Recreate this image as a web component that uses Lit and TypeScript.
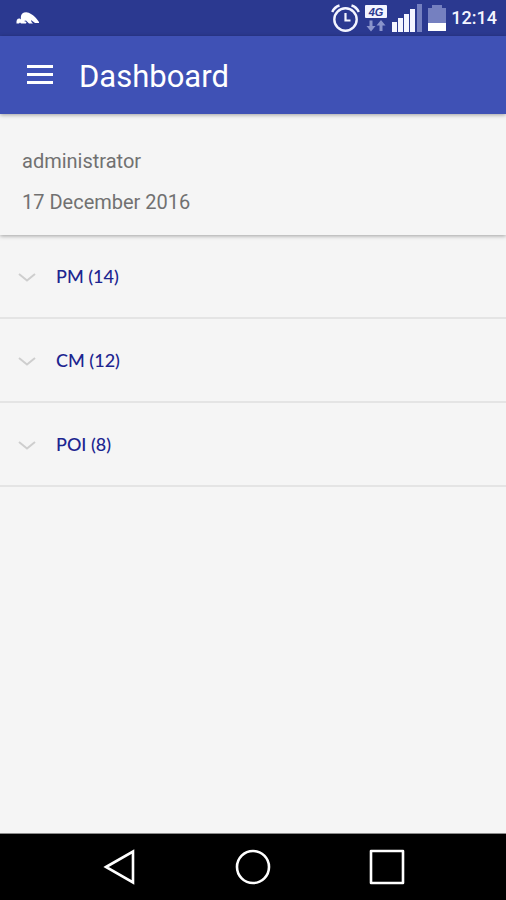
import { LitElement, html, css } from "lit";
import { customElement, property, state } from "lit/decorators.js";

@customElement("status-bar")
class StatusBar extends LitElement {
  static styles = css`
    :host {
      display: flex;
      align-items: center;
      justify-content: space-between;
      height: 36px;
      padding: 0 9px 0 16px;
      background: #2b3990;
      color: #f4f5ff;
      font: 500 18px/36px Roboto, sans-serif;
    }
    .indicators {
      display: flex;
      align-items: center;
      gap: 5px;
    }
    svg {
      display: block;
    }
    .net {
      font: italic 700 11px "Liberation Sans", sans-serif;
      fill: #2b3990;
    }
  `;
  render() {
    return html`
      <svg width="24" height="14" viewBox="0 0 24 14" fill="#fff" aria-hidden="true">
        <path d="M0.500 12.500Q0 7 4 7.500L5 8.500Q4 3 8 1.500Q12 0.500 15 3Q19 5 23 11V12H19L15 9L15.500 11L17 12.500H13L10 9.500L8 10L10.500 11L10 12.500H5L4 11.500L3 12.500Z"/>
      </svg>
      <div class="indicators">
        <svg width="29" height="28" viewBox="0 0 29 28" fill="none" stroke="#f4f5ff" aria-hidden="true">
          <circle cx="14.500" cy="15.500" r="11.200" stroke-width="2.400"/>
          <path d="M14.500 9V16.500H19.500" stroke-width="2.200"/>
          <path d="M1.200 8Q3.500 3 8.500 1.500M27.800 8Q25.500 3 20.500 1.500" stroke-width="2.400"/>
        </svg>
        <svg width="22" height="28" viewBox="0 0 22 28" aria-label="4G">
          <rect y="1" width="22" height="13" rx="1" fill="#f4f5ff"/>
          <text class="net" x="11" y="12" text-anchor="middle">4G</text>
          <path d="M4.500 16.500H7.500V22H10.500L6 27.500L1.500 22H4.500ZM14.500 27H17.500V21.500H20.500L16 16L11.500 21.500H14.500Z" fill="#8a94cb"/>
        </svg>
        <svg width="31" height="28" viewBox="0 0 31 28" fill="#f4f5ff" aria-hidden="true">
          <path d="M0 18H5V28H0ZM6 14H11V28H6ZM12 10H17V28H12ZM18 5H23V28H18Z"/>
          <path d="M25 0H30V28H25Z" fill="#7580c0"/>
        </svg>
        <svg width="18" height="28" viewBox="0 0 18 28" aria-hidden="true">
          <path d="M4 1H14V4H18V19H0V4H4Z" fill="#7580c0"/>
          <rect y="19" width="18" height="8" fill="#fff"/>
        </svg>
        <time>12:14</time>
      </div>
    `;
  }
}

@customElement("group-row")
class GroupRow extends LitElement {
  @property() label = "";
  @property({ type: Number }) count = 0;
  @state() private open = false;

  static styles = css`
    :host {
      display: block;
      border-bottom: 2px solid #e4e4e4;
    }
    button {
      display: flex;
      align-items: center;
      gap: 20px;
      width: 100%;
      height: 82px;
      padding: 0 18px;
      border: 0;
      background: none;
      color: #1c2590;
      font: 500 18px/24px Lato, sans-serif;
      text-align: left;
    }
    svg {
      display: block;
    }
  `;
  render() {
    return html`
      <button aria-expanded=${this.open} @click=${() => (this.open = !this.open)}>
        <svg width="18" height="12" viewBox="0 0 18 12" fill="none" stroke="#cecece" stroke-width="2" aria-hidden="true">
          <path d="M1 4L9 10.500L17 4"/>
        </svg>
        <span>${this.label} (${this.count})</span>
      </button>
    `;
  }
}

@customElement("app-root")
class AppRoot extends LitElement {
  private groups = [
    { label: "PM", count: 14 },
    { label: "CM", count: 12 },
    { label: "POI", count: 8 },
  ];

  static styles = css`
    :host {
      display: flex;
      flex-direction: column;
      min-height: 100vh;
      background: #f5f5f5;
      font-family: Roboto, sans-serif;
    }
    .bar {
      display: flex;
      align-items: center;
      gap: 25px;
      height: 78px;
      padding: 0 26px;
      background: #3f51b5;
      color: #fff;
      box-shadow: 0 1px 4px rgba(0, 0, 0, 0.35);
      z-index: 1;
    }
    button {
      padding: 0;
      border: 0;
      background: none;
    }
    svg {
      display: block;
    }
    h1 {
      margin: 0;
      padding-top: 4px;
      font-size: 31px;
      line-height: 40px;
      font-weight: 400;
    }
    .user {
      display: grid;
      gap: 17px;
      padding: 35px 22px 21px;
      background: #f5f5f5;
      color: #717171;
      font-size: 20px;
      line-height: 24px;
      box-shadow: 0 1px 4px rgba(0, 0, 0, 0.35);
    }
    p {
      margin: 0;
    }
    main {
      flex: 1;
    }
    .nav {
      display: flex;
      align-items: center;
      justify-content: center;
      gap: 98px;
      height: 66px;
      background: #000;
      border-top: 1px solid #8c8c8c;
    }
  `;
  render() {
    return html`
      <status-bar></status-bar>
      <header class="bar">
        <button aria-label="Menu">
          <svg width="28" height="22" viewBox="0 0 28 22" fill="#fff">
            <path d="M1 1H27V4H1ZM1 9H27V12H1ZM1 17H27V20H1Z"/>
          </svg>
        </button>
        <h1>Dashboard</h1>
      </header>
      <section class="user">
        <p>administrator</p>
        <p>17 December 2016</p>
      </section>
      <main>
        ${this.groups.map((g) => html`<group-row .label=${g.label} .count=${g.count}></group-row>`)}
      </main>
      <nav class="nav">
        <button aria-label="Back">
          <svg width="36" height="36" viewBox="0 0 36 36" fill="none" stroke="#fff" stroke-width="2.600">
            <path d="M5 18L32 2.500V33.500Z"/>
          </svg>
        </button>
        <button aria-label="Home">
          <svg width="36" height="36" viewBox="0 0 36 36" fill="none" stroke="#fff" stroke-width="2.600">
            <circle cx="18" cy="18" r="16"/>
          </svg>
        </button>
        <button aria-label="Recent apps">
          <svg width="36" height="36" viewBox="0 0 36 36" fill="none" stroke="#fff" stroke-width="2.600" stroke-linejoin="round">
            <path d="M2 2H34V34H2Z"/>
          </svg>
        </button>
      </nav>
    `;
  }
}
